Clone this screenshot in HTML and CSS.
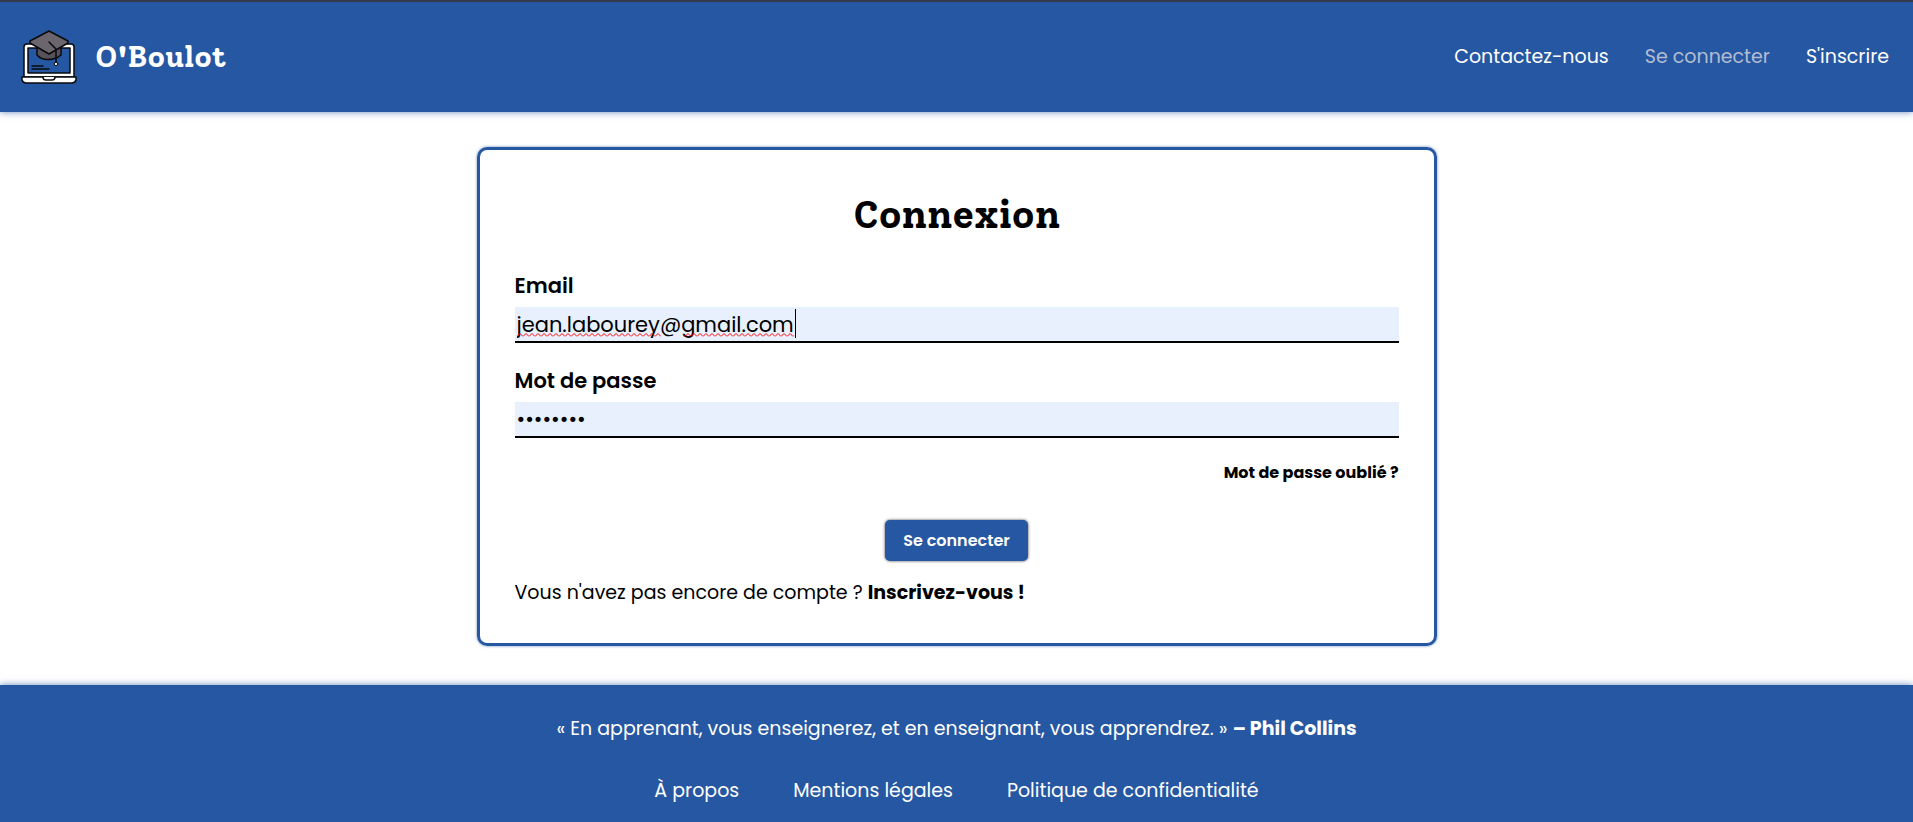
FILE: index.html
```html
<!DOCTYPE html>
<html lang="fr">
<head>
<meta charset="utf-8">
<meta name="viewport" content="width=device-width, initial-scale=1">
<title>O'Boulot - Connexion</title>
<link rel="stylesheet" href="styles.css">
</head>
<body>
<header class="header">
  <a class="brand" href="#">
    <svg class="brand-logo" viewBox="0 0 56 54" aria-hidden="true" stroke="#080a0c" stroke-width="1.5" stroke-linejoin="round" stroke-linecap="round">
      <path d="M3 47V17q0-3 3-3h44q3 0 3 3v30z" fill="#fff"/>
      <path d="M7 18h42v25H7z" fill="#2657a2"/>
      <path d="M11 36h11M11 39h17" fill="none"/>
      <path d="M1 47h54v3q-1 3-4 3H5q-3 0-4-3z" fill="#fff"/>
      <path d="M22 47q0 3 3 3h6q3 0 3-3" fill="#fff"/>
      <path d="M16 17v8q5 6 16 4 5-1 8-4v-8z" fill="#57525a"/>
      <path d="M28 1 47 11v2L28 24 9 13v-2z" fill="#6b666e"/>
      <path d="M28 12 35 19v13" fill="none"/>
      <circle cx="35" cy="34" r="1.7" fill="#fff" stroke-width="1"/>
    </svg>
    <span>O'Boulot</span>
  </a>
  <nav class="nav">
    <a href="#">Contactez-nous</a>
    <a href="#" class="current">Se connecter</a>
    <a href="#">S'inscrire</a>
  </nav>
</header>
<main class="main">
  <form class="card">
    <h1 class="title">Connexion</h1>
    <div class="field">
      <label for="email">Email</label>
      <div class="control">
        <input id="email" type="email" value="jean.labourey@gmail.com" spellcheck="false">
        <svg class="spelling" width="279" height="30" aria-hidden="true">
          <defs><pattern id="wave" width="6" height="4" patternUnits="userSpaceOnUse"><path d="M0 3.5 3 .5 6 3.5" fill="none" stroke="#ff0000"/></pattern></defs>
          <rect x="0" y="24" width="144" height="4" fill="url(#wave)"/>
          <rect x="166" y="24" width="111" height="4" fill="url(#wave)"/>
          <path d="M278.5 0v29" stroke="#000"/>
        </svg>
      </div>
    </div>
    <div class="field">
      <label for="password">Mot de passe</label>
      <div class="control"><input id="password" type="password" value="password"></div>
    </div>
    <a class="forgot" href="#">Mot de passe oublié ?</a>
    <button class="submit" type="submit">Se connecter</button>
    <p class="signup">Vous n'avez pas encore de compte ? <a href="#">Inscrivez-vous !</a></p>
  </form>
</main>
<footer class="footer">
  <p class="quote">« En apprenant, vous enseignerez, et en enseignant, vous apprendrez. » <strong>– Phil Collins</strong></p>
  <nav class="footer-links">
    <a href="#">À propos</a>
    <a href="#">Mentions légales</a>
    <a href="#">Politique de confidentialité</a>
  </nav>
</footer>
</body>
</html>
```

FILE: styles.css
```css
:root {
  --blue: #2657a2;
  --shadow: #2657a2b0;
}

* {
  box-sizing: border-box;
}

body {
  margin: 0;
  min-height: 100vh;
  display: flex;
  flex-direction: column;
  background: #fff;
  color: #000;
  font-family: Poppins, Inter, "Liberation Sans", sans-serif;
  font-size: 19px;
  line-height: 30px;
}

a {
  color: inherit;
  text-decoration: none;
}

.header {
  display: flex;
  align-items: center;
  justify-content: space-between;
  padding: 28px 24px 28px 21px;
  border-top: 2px solid #323a4b;
  background: var(--blue);
  color: #fff;
  box-shadow: 0 0 7px var(--shadow);
}

.brand {
  display: flex;
  align-items: center;
  gap: 18px;
  font: bold 30px/36px Solway, "DejaVu Serif", serif;
}

.brand-logo {
  width: 56px;
  height: 54px;
}

.nav {
  display: flex;
  gap: 36px;
}

.nav .current {
  color: #b4bdd2;
}

.main {
  flex: 1;
  padding: 35px 20px 38px;
}

.card {
  display: flex;
  flex-direction: column;
  max-width: 960px;
  margin: 0 auto;
  padding: 35px;
  border: 3px solid var(--blue);
  border-radius: 10px;
  box-shadow: 0 0 3px var(--shadow);
}

.title {
  margin: 6px 0 31px;
  text-align: center;
  font: bold 39px/48px Solway, "DejaVu Serif", serif;
}

.field {
  margin-bottom: 22px;
}

.field label {
  display: block;
  margin-bottom: 6px;
  font-size: 21px;
  line-height: 31px;
  font-weight: 600;
}

.control {
  position: relative;
}

.control input {
  display: block;
  width: 100%;
  height: 36px;
  padding: 0 2px;
  border: 0;
  border-bottom: 2px solid #000;
  outline: 0;
  background: #e8f0fe;
  color: #000;
  font: inherit;
  font-size: 21px;
}

.spelling {
  position: absolute;
  left: 2px;
  top: 2px;
}

.forgot {
  align-self: flex-end;
  font-size: 16px;
  line-height: 25px;
  font-weight: 700;
}

.submit {
  align-self: center;
  margin: 35px 0 17px;
  padding: 8px 18px;
  border: 0;
  border-radius: 5px;
  background: var(--blue);
  box-shadow: 0 0 3px #444;
  color: #fff;
  font: inherit;
  font-size: 16px;
  line-height: 25px;
  font-weight: 600;
}

.signup {
  margin: 0;
}

.signup a {
  font-weight: 700;
}

.footer {
  padding: 29px 20px 16px;
  background: var(--blue);
  color: #fff;
  text-align: center;
  box-shadow: 0 0 7px var(--shadow);
}

.quote {
  margin: 0 0 32px;
}

.footer-links {
  display: flex;
  flex-wrap: wrap;
  justify-content: center;
  gap: 16px 54px;
}
```
